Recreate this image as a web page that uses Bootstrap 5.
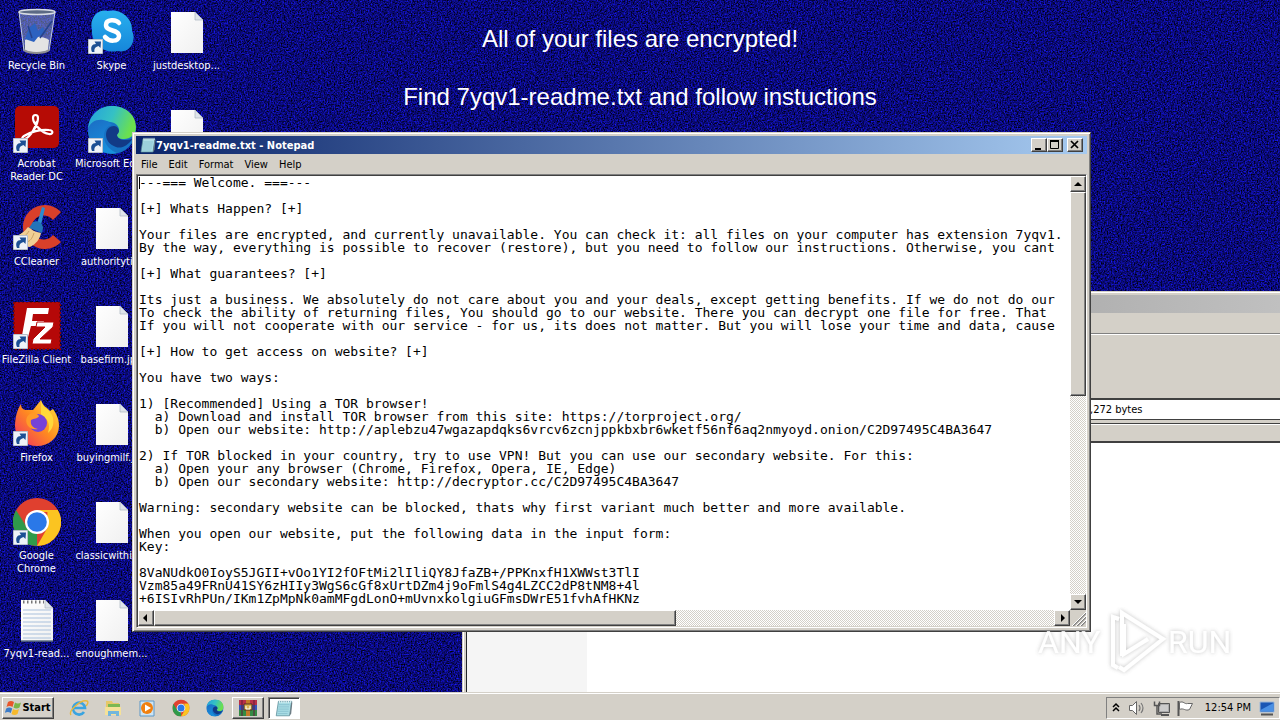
<!DOCTYPE html>
<html lang="en">
<head>
<meta charset="utf-8">
<meta name="viewport" content="width=device-width, initial-scale=1">
<title>Desktop</title>
<link href="https://cdn.jsdelivr.net/npm/bootstrap@5.3.0/dist/css/bootstrap.min.css" rel="stylesheet">
<style>
:root{--face:#d4d0c8;--dark:#404040;--mid:#808080}
body{font-family:"DejaVu Sans Condensed","DejaVu Sans",sans-serif;font-size:11px;line-height:13px;color:#000;background:#0a0a72}
button{font:inherit;color:inherit;padding:0;border-radius:0;background:var(--face)}
.defs{width:0;height:0}
.noise{width:100%;height:100%}
.wall-text{top:24px;font-family:"Liberation Sans",sans-serif;font-size:24px;line-height:29px;color:#fff}
.icon-col{width:75px}
.shortcut{height:98px;color:#fff;text-decoration:none}
.shortcut svg{width:48px;height:48px;flex:none;margin-bottom:3px}
.icons{top:8px;left:-1px}
.raised{border:1px solid;border-color:#fff var(--dark) var(--dark) #fff;box-shadow:inset -1px -1px 0 var(--mid)}
.sunken{border:1px solid;border-color:var(--mid) #fff #fff var(--mid);box-shadow:inset 1px 1px 0 var(--dark)}
.win{background:var(--face);border:1px solid;border-color:#d4d0c8 #404040 #404040 #d4d0c8;box-shadow:inset 1px 1px 0 #fff,inset -1px -1px 0 #808080;padding:3px}
.notepad{left:132px;top:132px;right:189px;bottom:60px}
.archive{left:462px;top:291px;right:-4px;bottom:-4px}
.title{height:18px;color:#fff;font-weight:700;background:linear-gradient(90deg,#0a246a,#a6caf0)}
.title svg{width:16px;height:16px}
.title.off{background:linear-gradient(90deg,#808080,#c0c0c0)}
.cap{width:16px;height:14px}
.title .cap svg{width:14px;height:12px;display:block}
.menus{height:20px}
.menus button{border:0;padding:0 5px;margin-right:1px}
.edit-box{border:1px solid;border-color:#808080 #fff #fff #808080;box-shadow:inset 1px 1px 0 #404040;padding:1px 0 1px 1px}
.note{border:0;padding:0 0 0 1px;resize:none;overflow:hidden;white-space:pre;outline:0;font-family:"DejaVu Sans Mono","Liberation Mono",monospace;font-size:13px;line-height:13px;color:#000}
.caret{left:1px;top:1px;width:1px;height:12px;background:#000}
.track{background:repeating-conic-gradient(#fff 0 25%,#d4d0c8 0 50%) 0 0/2px 2px}
.v-bar{width:16px}.h-bar{height:16px}
.arrow{width:16px;height:16px;flex:none}
.arrow svg{display:block;width:14px;height:14px}
.v-thumb{flex:0 0 47%;background:var(--face)}
.h-thumb{flex:0 0 56%;background:var(--face)}
.grip{width:16px;height:16px;background:var(--face)}
.tools{height:65px;border-top:1px solid #808080;box-shadow:inset 0 1px 0 #fff}
.path{height:22px;border:solid #404040;border-width:2px 0 1px;background:#fff}
.path input{border:0;outline:0;padding:0;width:100px;margin-left:624px;font:inherit}
.heads{height:20px;margin-top:3px;border:solid;border-width:1px 0 2px;border-color:#404040;box-shadow:inset 0 1px #fff}
.side{width:120px;background:#f5f5f5}
.taskbar{height:28px;background:var(--face);border-top:1px solid #d4d0c8;box-shadow:inset 0 1px #fff;padding:3px 0 1px 2px}
.start{width:52px;height:22px;font-weight:700}
.start svg{width:17px;height:16px}
.quick{width:34px;border:0}
.quick svg,.task svg{width:20px;height:20px}
.task{width:32px;height:22px}
.task.on{background:#fff}
.tray{width:174px;height:22px;border:1px solid;border-color:#808080 #fff #fff #808080}
.tray svg{height:18px}
.mark-logo{right:36px;bottom:44px;width:212px;height:70px;pointer-events:none;font-family:Roboto,sans-serif;font-size:32px}
</style>
</head>
<body class="vh-100 overflow-hidden d-flex flex-column">

<svg class="defs position-absolute" aria-hidden="true">
 <defs>
  <linearGradient id="gSheet" x1="0" y1="0" x2="1" y2="1"><stop offset="0" stop-color="#fff"/><stop offset="1" stop-color="#f0f0f0"/></linearGradient>
  <linearGradient id="gE1" x1="0" y1="0" x2="1" y2=".3"><stop offset="0" stop-color="#249fde"/><stop offset=".55" stop-color="#35c1c4"/><stop offset="1" stop-color="#6be04e"/></linearGradient>
  <linearGradient id="gE2" x1="0" y1="0" x2=".5" y2="1"><stop offset="0" stop-color="#1b6cc4"/><stop offset="1" stop-color="#1890dc"/></linearGradient>
 </defs>
 <symbol id="link" viewBox="0 0 15 15"><path d="M.5.5h14v14H.5z" fill="#eef2f8" stroke="#b8c0cc"/><path d="M4 13C2 8 4 5 8 5L6.500 2.500 13 2.500 12.500 9 10.500 7C7 8 6 10 6.500 13z" fill="#1c4f94"/></symbol>
 <symbol id="sheet" viewBox="0 0 48 48"><path d="M8 4h24l8 8v33H8z" fill="url(#gSheet)"/><path d="M32 4v8h8z" fill="#dfe4ea" stroke="#aab4c0" stroke-width=".7"/></symbol>
 <symbol id="pad" viewBox="0 0 16 16"><path d="M3 2h12l-2 13H1z" fill="#a8dce4" stroke="#5a8c98" stroke-width=".7"/><path d="M3.500 5h9.500M3 7h9.500M2.800 9h9.500M2.500 11h9.500M2.200 13h9" stroke="#7fbac8" stroke-width=".6"/><path d="M4 .8v2.500M6 .8v2.500M8 .8v2.500M10 .8v2.500M12 .8v2.500M14 .8v2.500" stroke="#e8f4f6" stroke-width=".9"/><path d="M14.500 3 13 15l1.500-2 1-10z" fill="#6c7c84"/></symbol>
 <symbol id="edge" viewBox="0 0 48 48">
  <circle cx="24" cy="24" r="24" fill="#1672c4"/>
  <path d="M0 23C1 8 12 0 24 0c15 0 24 10 24 21 0 8-6 12-12 12-5 0-7-2-7-4 0-1 2-2 2-5 0-4-4-8-9-8C12 13 3 16 0 23z" fill="url(#gE1)"/>
  <path d="M0 24c1-8 9-11 15-10 6 1 8 4 9 5-5 1-8 5-8 11 0 9 7 15 13 17C14 50 0 40 0 24z" fill="url(#gE2)"/>
  <path d="M18 29c0-6 4-9 8-9 3 0 5 3 5 5s-2 3-2 4c0 3 4 5 8 5 4 0 7-1 8-2-5 8-12 11-17 9-6-2-10-7-10-12z" fill="#123a86"/>
 </symbol>
 <symbol id="chrome" viewBox="0 0 48 48"><circle cx="24" cy="24" r="24" fill="#e0402f"/><path d="M3.200 12 13.600 30 24 36 24 48A24 24 0 0 1 3.200 12z" fill="#2f9a4b"/><path d="M24 48 34.400 30 34.400 12H44.800A24 24 0 0 1 24 48z" fill="#fbc421"/><path d="M24 12h20.800v2H30z" fill="#fbc421"/><path d="M3.200 12 13 29l6-14z" fill="#e0402f"/><path d="M3.200 12 14 31l10 5-2 6z" fill="#2f9a4b"/><circle cx="24" cy="24" r="12" fill="#fff"/><circle cx="24" cy="24" r="9.800" fill="#2a78e8"/></symbol>
</svg>

<main class="position-relative flex-grow-1 overflow-hidden">
 <svg class="noise position-absolute top-0 start-0" aria-hidden="true">
  <filter id="grain" x="0" y="0" width="100%" height="100%" color-interpolation-filters="sRGB"><feTurbulence type="fractalNoise" baseFrequency=".7" numOctaves="2" seed="4"/><feColorMatrix values=".16 0 0 0 -.04  .16 0 0 0 -.04  1.5 0 0 0 -.28  0 0 0 0 1"/></filter>
  <rect width="100%" height="100%" filter="url(#grain)"/>
 </svg>

 <div class="wall-text position-absolute start-0 w-100 text-center">All of your files are encrypted!<br><br>Find 7yqv1-readme.txt and follow instuctions</div>

 <nav class="icons position-absolute d-flex" aria-label="Desktop icons">
  <div class="icon-col d-flex flex-column">
   <a href="#" class="shortcut d-flex flex-column align-items-center text-center text-nowrap"><svg viewBox="0 0 48 48"><path d="M6 4 11 43c4 3 21 3 25 0L42 4z" fill="#8fa4cc" fill-opacity=".55"/><path d="M12 32c7-5 18-4 24 0l-1 10c-5 3-18 3-23 0z" fill="#e4e4e4"/><path d="M16 20l6-5 3 8 5-4 3 6-8 4-4 5-9-3z" fill="#2c62c0"/><path d="M27 30 39 13M15 18l4 12" stroke="#26438c" stroke-width="1.500"/><path d="M6 4 11 43M42 4 36 43" stroke="#c4cfe4"/><ellipse cx="24" cy="4" rx="18" ry="2.500" fill="#5c6a84" stroke="#d8dce4" stroke-width="1.500"/><path d="M11 42c5 4 20 4 25 0" fill="none" stroke="#909090" stroke-width="2"/></svg>Recycle Bin</a>
   <a href="#" class="shortcut d-flex flex-column align-items-center text-center text-nowrap"><svg viewBox="0 0 48 48"><rect x="2" width="44" height="42" rx="5" fill="#b60b05"/><path d="M12 33c5-2 13-13 13-21 0-4-5-4-5 0 0 6 9 15 16 16 4 1 5-4 0-4-8-1-19 2-25 6-4 3-1 6 2 3 5-4 10-12 11-18" fill="none" stroke="#fff" stroke-width="2.200"/><use href="#link" x="0" y="32" width="15" height="15"/></svg>Acrobat<br>Reader DC</a>
   <a href="#" class="shortcut d-flex flex-column align-items-center text-center text-nowrap"><svg viewBox="0 0 48 48"><path d="M48 8A22 22 0 1 0 48 38L40 31A12 12 0 1 1 40 16z" fill="#d8402a"/><path d="M29 3l3 1-4 17-4-1z" fill="#2a8cd0"/><path d="M20 18c4-2 10 1 10 6l-1 5-13-5z" fill="#2374b8"/><path d="M15 23c5 4 9 5 13 6-1 6-5 11-11 14-6 0-12-5-15-11 5-1 9-4 13-9z" fill="#f0cf94"/><path d="M16 27c-3 5-6 6-9 7m14-5c-2 6-4 8-7 9" stroke="#caa262" fill="none"/><use href="#link" x="0" y="31" width="15" height="15"/></svg>CCleaner</a>
   <a href="#" class="shortcut d-flex flex-column align-items-center text-center text-nowrap"><svg viewBox="0 0 48 48"><path d="M1 0h46v47H1z" fill="#b50808" stroke="#860606" stroke-width="2" stroke-dasharray="2 2"/><path d="M14 6h22l-1 6H20l-1 7h12l-1 5H18l-4 15H8z" fill="#fff"/><path d="M24 20h17l-1 5-13 12h12l-1 5H19l1-5 12-12h-9z" fill="#fff" stroke="#b50808"/><use href="#link" x="0" y="32" width="15" height="15"/></svg>FileZilla Client</a>
   <a href="#" class="shortcut d-flex flex-column align-items-center text-center text-nowrap"><svg viewBox="0 0 48 48"><linearGradient id="gF" x1="1" y1="0" x2="0" y2="1"><stop offset="0" stop-color="#ffe83c"/><stop offset=".5" stop-color="#ff8a20"/><stop offset="1" stop-color="#f02868"/></linearGradient><path d="M8 4c0 4 2 5 4 6l8 0 8-10c2 7 6 7 9 11l3-2c5 7 6 12 6 17A22 20 0 0 1 2 26C2 18 4 10 8 4z" fill="url(#gF)"/><path d="M28 1c2 7 8 8 11 14 3 7 1 14-4 18 3-10-1-15-7-18z" fill="#ffd93a"/><circle cx="25" cy="23" r="9" fill="#7542d8"/><path d="M14 17c3-5 9-5 12-1-1 3-5 2-8 4-1 5 2 8 7 9-8 2-14-5-11-12z" fill="#ff9a28"/><use href="#link" x="0" y="31" width="15" height="15"/></svg>Firefox</a>
   <a href="#" class="shortcut d-flex flex-column align-items-center text-center text-nowrap"><svg viewBox="0 0 48 48"><use href="#chrome"/><use href="#link" x="0" y="32" width="15" height="15"/></svg>Google<br>Chrome</a>
   <a href="#" class="shortcut d-flex flex-column align-items-center text-center text-nowrap"><svg viewBox="0 0 48 48"><use href="#sheet"/><path d="M10 14h28M10 18h28M10 22h28M10 26h28M10 30h28M10 34h28M10 38h28M10 42h28" stroke="#a9c0dc"/><path d="M10 6h21" stroke="#777" stroke-width="3" stroke-dasharray="1.500 2.500"/><path d="M8 45h32" stroke="#5e6f86" stroke-width="1.500"/></svg>7yqv1-read...</a>
  </div>
  <div class="icon-col d-flex flex-column">
   <a href="#" class="shortcut d-flex flex-column align-items-center text-center text-nowrap"><svg viewBox="0 0 48 48"><linearGradient id="gS" x1="0" y1="0" x2="0" y2="1"><stop offset="0" stop-color="#28b0ee"/><stop offset="1" stop-color="#1686da"/></linearGradient><path d="M4 22C1 10 10 0 20 3c12-3 25 7 24 20 5 9-2 23-14 20C16 46 3 36 4 22z" fill="url(#gS)"/><path d="M31 15c-3-4-13-4-13 2 0 7 13 4 13 11 0 6-10 6-14 1" fill="none" stroke="#fff" stroke-width="4.500" stroke-linecap="round"/><use href="#link" x="0" y="31" width="15" height="15"/></svg>Skype</a>
   <a href="#" class="shortcut d-flex flex-column align-items-center text-center text-nowrap"><svg viewBox="0 0 48 48"><use href="#edge"/><use href="#link" x="0" y="32" width="15" height="15"/></svg>Microsoft Edge</a>
   <a href="#" class="shortcut d-flex flex-column align-items-center text-center text-nowrap"><svg><use href="#sheet"/></svg>authorityti...</a>
   <a href="#" class="shortcut d-flex flex-column align-items-center text-center text-nowrap"><svg><use href="#sheet"/></svg>basefirm.jpg</a>
   <a href="#" class="shortcut d-flex flex-column align-items-center text-center text-nowrap"><svg><use href="#sheet"/></svg>buyingmilf.jpg</a>
   <a href="#" class="shortcut d-flex flex-column align-items-center text-center text-nowrap"><svg><use href="#sheet"/></svg>classicwithin...</a>
   <a href="#" class="shortcut d-flex flex-column align-items-center text-center text-nowrap"><svg><use href="#sheet"/></svg>enoughmem...</a>
  </div>
  <div class="icon-col d-flex flex-column">
   <a href="#" class="shortcut d-flex flex-column align-items-center text-center text-nowrap"><svg><use href="#sheet"/></svg>justdesktop...</a>
   <a href="#" class="shortcut d-flex flex-column align-items-center" aria-label="File"><svg><use href="#sheet"/></svg></a>
  </div>
 </nav>

 <section class="win archive position-absolute d-flex flex-column" aria-label="Archive window">
  <div class="title off flex-shrink-0"></div>
  <div class="menus flex-shrink-0"></div>
  <div class="tools flex-shrink-0"></div>
  <div class="path d-flex align-items-center flex-shrink-0"><input type="text" value=",272 bytes" aria-label="Archive size" readonly></div>
  <div class="heads flex-shrink-0"></div>
  <div class="d-flex flex-grow-1 bg-white border-start border-dark"><div class="side"></div></div>
 </section>

 <section class="win notepad position-absolute d-flex flex-column" aria-label="Notepad">
  <header class="title d-flex align-items-center flex-shrink-0 ps-1">
   <svg class="flex-shrink-0"><use href="#pad"/></svg><span class="me-auto">7yqv1-readme.txt - Notepad</span>
   <button class="cap raised" aria-label="Minimize"><svg viewBox="0 0 14 12"><path d="M3 9h6v2H3z"/></svg></button>
   <button class="cap raised" aria-label="Maximize"><svg viewBox="0 0 14 12"><path d="M2.500 2.500h8v7h-8z" fill="none" stroke="#000"/><path d="M2 1h9v2H2z"/></svg></button>
   <button class="cap raised ms-1 me-1" aria-label="Close"><svg viewBox="0 0 14 12"><path d="M3 2l7 7M10 2 3 9" stroke="#000" stroke-width="1.700"/></svg></button>
  </header>
  <nav class="menus d-flex align-items-center flex-shrink-0"><button>File</button><button>Edit</button><button>Format</button><button>View</button><button>Help</button></nav>
  <div class="edit-box d-flex flex-column flex-grow-1 overflow-hidden">
   <div class="d-flex flex-grow-1 overflow-hidden">
    <div class="position-relative flex-grow-1 d-flex">
     <textarea class="note flex-grow-1" aria-label="Text" spellcheck="false" readonly>---=== Welcome. ===---

[+] Whats Happen? [+]

Your files are encrypted, and currently unavailable. You can check it: all files on your computer has extension 7yqv1.
By the way, everything is possible to recover (restore), but you need to follow our instructions. Otherwise, you cant

[+] What guarantees? [+]

Its just a business. We absolutely do not care about you and your deals, except getting benefits. If we do not do our
To check the ability of returning files, You should go to our website. There you can decrypt one file for free. That
If you will not cooperate with our service - for us, its does not matter. But you will lose your time and data, cause

[+] How to get access on website? [+]

You have two ways:

1) [Recommended] Using a TOR browser!
  a) Download and install TOR browser from this site: https://torproject.org/
  b) Open our website: http://aplebzu47wgazapdqks6vrcv6zcnjppkbxbr6wketf56nf6aq2nmyoyd.onion/C2D97495C4BA3647

2) If TOR blocked in your country, try to use VPN! But you can use our secondary website. For this:
  a) Open your any browser (Chrome, Firefox, Opera, IE, Edge)
  b) Open our secondary website: http://decryptor.cc/C2D97495C4BA3647

Warning: secondary website can be blocked, thats why first variant much better and more available.

When you open our website, put the following data in the input form:
Key:

8VaNUdkO0IoyS5JGII+vOo1YI2fOFtMi2lIliQY8JfaZB+/PPKnxfH1XWWst3TlI
Vzm85a49FRnU41SY6zHIIy3WgS6cGf8xUrtDZm4j9oFmlS4g4LZCC2dP8tNM8+4l
+6ISIvRhPUn/IKm1ZpMpNk0amMFgdLonO+mUvnxkolgiuGFmsDWrE51fvhAfHKNz</textarea>
     <span class="caret position-absolute"></span>
    </div>
    <div class="v-bar track d-flex flex-column flex-shrink-0">
     <button class="arrow raised" aria-label="Scroll up"><svg viewBox="0 0 14 14"><path d="M3 9h8L7 5z"/></svg></button>
     <div class="v-thumb raised"></div>
     <button class="arrow raised mt-auto" aria-label="Scroll down"><svg viewBox="0 0 14 14"><path d="M3 5h8L7 9z"/></svg></button>
    </div>
   </div>
   <div class="d-flex flex-shrink-0">
    <div class="h-bar track d-flex flex-grow-1">
     <button class="arrow raised" aria-label="Scroll left"><svg viewBox="0 0 14 14"><path d="M8 3v8L4 7z"/></svg></button>
     <div class="h-thumb raised"></div>
     <button class="arrow raised ms-auto" aria-label="Scroll right"><svg viewBox="0 0 14 14"><path d="M6 3v8l4-4z"/></svg></button>
    </div>
    <svg class="grip" aria-hidden="true"><path d="M3 16 16 3M7 16l9-9M11 16l5-5" stroke="#808080" stroke-width="1.500"/><path d="M2 16 16 2M6 16l10-10M10 16l6-6" stroke="#fff"/></svg>
   </div>
  </div>
 </section>
</main>

<footer class="taskbar d-flex align-items-center flex-shrink-0 position-relative">
 <button class="start raised d-flex align-items-center justify-content-center me-2"><svg viewBox="0 0 17 16"><path d="M3 2q3-2 6 0L7.500 7q-3-2-6 0z" fill="#e8562a"/><path d="M10 2.500q3 2 6 0L14.500 7.500q-3 2-6 0z" fill="#7ab648"/><path d="M1.200 8.500q3-2 6 0L5.800 13q-3-2-6 0z" fill="#3c7cc8"/><path d="M8 9q3 2 6 0l-1.500 5q-3 2-6 0z" fill="#f6b92c"/></svg>Start</button>
 <button class="quick" aria-label="Internet Explorer"><svg viewBox="0 0 20 20"><path d="M15 14a6 6 0 1 1 1-4H5" fill="none" stroke="#3aa4e0" stroke-width="2.600"/><path d="M2 17C-1 13 12 1 18 3c2 1 0 4-1 5" fill="none" stroke="#e8b83c" stroke-width="1.400"/></svg></button>
 <button class="quick" aria-label="File Explorer"><svg viewBox="0 0 20 20"><path d="M3 3h6l1 2h6v12H3z" fill="#e6c868"/><path d="M5 6h12v5H5z" fill="#7cb854"/><path d="M2 9h16v8H2z" fill="#f5e199"/><path d="M5 18v-5h11v5h-3v-2H8v2z" fill="#72b6dc"/></svg></button>
 <button class="quick" aria-label="Media Player"><svg viewBox="0 0 20 20"><path d="M3 3h14v15H3z" fill="#cde4f4" stroke="#5c98c8"/><circle cx="10" cy="10" r="6" fill="#f08010"/><path d="M8 6.500v7l6-3.500z" fill="#fff"/></svg></button>
 <button class="quick" aria-label="Chrome"><svg viewBox="-4 -4 56 56"><use href="#chrome" width="48" height="48"/></svg></button>
 <button class="quick" aria-label="Edge"><svg viewBox="-4 -4 56 56"><use href="#edge" width="48" height="48"/></svg></button>
 <button class="task raised me-1" aria-label="WinRAR"><svg viewBox="0 0 20 20"><path d="M1 2h18v5H1z" fill="#b83048"/><path d="M1 7h18v5H1z" fill="#3454b8"/><path d="M1 12h18v6H1z" fill="#348c44"/><path d="M4 2v16M16 2v16" stroke="#601838"/><path d="M8 2h4v16H8z" fill="#c47c28"/><path d="M6 6h8v6H6z" fill="#d8b450" stroke="#54301c"/><path d="M8 8v3h4V8" fill="none" stroke="#fff"/></svg></button>
 <button class="task sunken on" aria-label="Notepad"><svg viewBox="-1 -1 18 18"><use href="#pad" width="16" height="16"/></svg></button>
 <div class="tray d-flex align-items-center ms-auto">
  <svg width="20" viewBox="0 0 20 18"><path d="M6 8l3-3 3 3M6 12l3-3 3 3" fill="none" stroke="#000" stroke-width="1.500"/></svg>
  <svg width="22" viewBox="0 0 22 18"><path d="M2.500 6.500h3l4-4v13l-4-4h-3z" fill="#fff" stroke="#666"/><path d="M12 6q2 3 0 6M14 4q4 5 0 10" fill="none" stroke="#777" stroke-width="1.200"/></svg>
  <svg width="24" viewBox="0 0 24 18"><path d="M9.500 4.500h11v9h-11z" fill="#aaa" stroke="#555"/><path d="M11 6h8v6h-8z" fill="#ccc"/><path d="M12 16h8" stroke="#555" stroke-width="2"/><path d="M5.500 2.500v4h5v-4M8 7v8h5" fill="none" stroke="#555" stroke-width="1.500"/></svg>
  <svg width="24" viewBox="0 0 24 18"><path d="M5.500 2v15" stroke="#555" stroke-width="2"/><path d="M6.500 3.500c4-2 5 2 8 1h5l-3 6c-4 2-6-2-10 0z" fill="#fff" stroke="#666"/></svg>
  <time class="ms-auto me-2">12:54 PM</time>
  <svg class="me-1" width="16" viewBox="0 0 16 18"><path d="M1 3h14v10H1z" fill="#1a56b4" stroke="#9cb8d8"/><path d="M1.500 11 14.500 4v8.500h-13z" fill="#4a90e4"/><path d="M2 15.500h12" stroke="#555" stroke-width="2"/></svg>
 </div>
</footer>

<svg class="mark-logo position-absolute" viewBox="0 0 212 70" aria-label="ANY RUN">
 <filter id="halo" x="-10%" y="-10%" width="120%" height="120%"><feDropShadow dx="0" dy="0" stdDeviation="2" flood-color="#888" flood-opacity=".6"/></filter>
 <g filter="url(#halo)" fill="#fff" opacity=".85">
  <text x="6" y="47">ANY</text><text x="136" y="47">RUN</text>
  <path d="M87 13l-6-2v48l5 3M90 50V7l41 26-39 31-5-3 M92 18v30l24-15" fill="none" stroke="#fff" stroke-width="4"/>
 </g>
</svg>
<script src="https://cdn.jsdelivr.net/npm/bootstrap@5.3.0/dist/js/bootstrap.bundle.min.js"></script>
</body>
</html>
